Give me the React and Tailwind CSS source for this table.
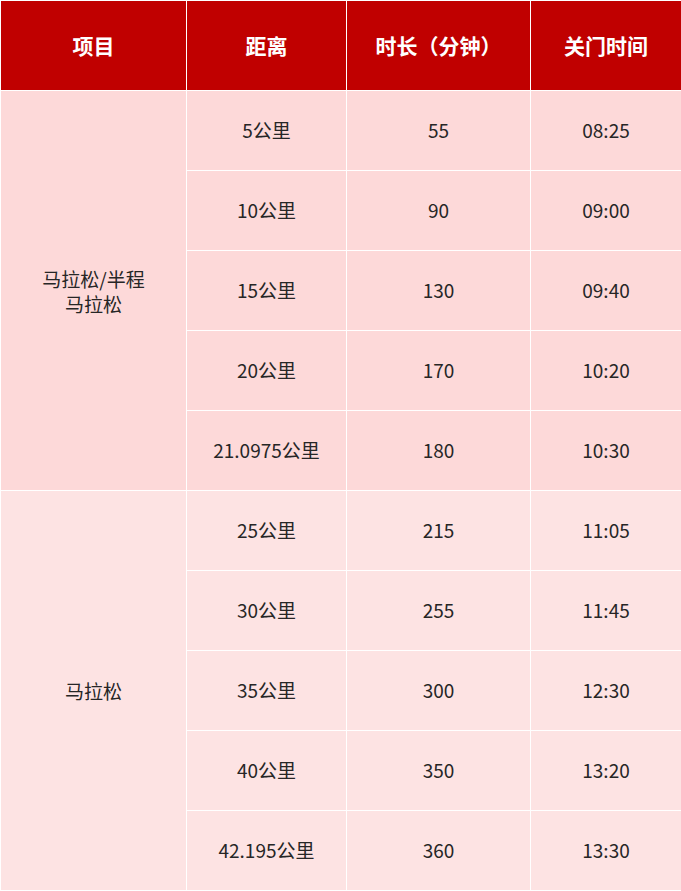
import React from "react";

const groups = [
  {
    name: ["马拉松/半程", "马拉松"],
    bg: "bg-[#fdd9d9]",
    rows: [
      ["5公里", "55", "08:25"],
      ["10公里", "90", "09:00"],
      ["15公里", "130", "09:40"],
      ["20公里", "170", "10:20"],
      ["21.0975公里", "180", "10:30"],
    ],
  },
  {
    name: ["马拉松"],
    bg: "bg-[#fde3e3]",
    rows: [
      ["25公里", "215", "11:05"],
      ["30公里", "255", "11:45"],
      ["35公里", "300", "12:30"],
      ["40公里", "350", "13:20"],
      ["42.195公里", "360", "13:30"],
    ],
  },
];

const headers = ["项目", "距离", "时长（分钟）", "关门时间"];

export default function App() {
  return (
    <div className="w-[681px] h-[891px] bg-white font-['Noto_Sans_CJK_SC','Liberation_Sans',sans-serif]">
      <table className="w-[681px] table-fixed border-collapse">
        <colgroup>
          <col className="w-[186px]" />
          <col className="w-[160px]" />
          <col className="w-[184px]" />
          <col className="w-[151px]" />
        </colgroup>
        <thead>
          <tr className="h-[90px] bg-[#c00000]">
            {headers.map((h) => (
              <th
                key={h}
                className="border border-white text-center text-[21px] font-bold text-white"
              >
                {h}
              </th>
            ))}
          </tr>
        </thead>
        <tbody>
          {groups.map((g) =>
            g.rows.map((r, i) => (
              <tr key={r[0]} className={`h-[80px] ${g.bg}`}>
                {i === 0 && (
                  <td
                    rowSpan={g.rows.length}
                    className="border border-white text-center text-[19px] leading-[25px] text-[#262626]"
                  >
                    {g.name.map((n) => (
                      <div key={n}>{n}</div>
                    ))}
                  </td>
                )}
                {r.map((c, j) => (
                  <td
                    key={j}
                    className="border border-white text-center text-[19px] text-[#262626]"
                  >
                    {c}
                  </td>
                ))}
              </tr>
            ))
          )}
        </tbody>
      </table>
    </div>
  );
}
